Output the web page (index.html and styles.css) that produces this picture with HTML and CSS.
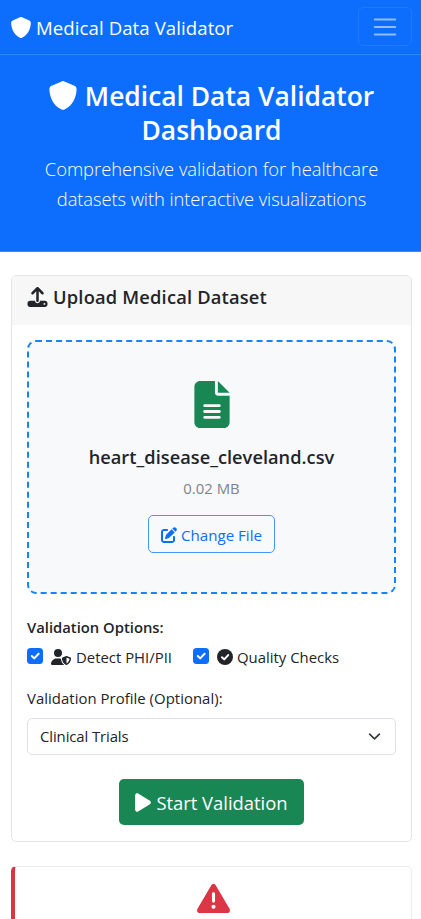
FILE: index.html
```html
<!DOCTYPE html>
<html lang="en">
<head>
<meta charset="utf-8">
<meta name="viewport" content="width=device-width, initial-scale=1">
<title>Medical Data Validator</title>
<link rel="stylesheet" href="styles.css">
</head>
<body>
<nav class="navbar">
  <a class="brand"><svg class="brand-icon" viewBox="16 0 480 512"><path d="M256 0c4.6 0 9.2 1 13.4 2.9L457.7 82.8c22 9.3 38.4 31 38.3 57.2c-.5 99.2-41.3 280.7-213.6 363.2c-16.7 8-36.1 8-52.8 0C57.3 420.7 16.5 239.2 16 140c-.1-26.2 16.3-47.9 38.3-57.2L242.7 2.9C246.8 1 251.4 0 256 0z"/></svg><span>Medical Data Validator</span></a>
  <button class="toggler" aria-label="Toggle navigation"><svg viewBox="0 0 30 30"><path d="M4 7h22M4 15h22M4 23h22"/></svg></button>
</nav>
<header class="hero">
  <h1><svg class="hero-icon" viewBox="16 0 480 512"><path d="M256 0c4.6 0 9.2 1 13.4 2.9L457.7 82.8c22 9.3 38.4 31 38.3 57.2c-.5 99.2-41.3 280.7-213.6 363.2c-16.7 8-36.1 8-52.8 0C57.3 420.7 16.5 239.2 16 140c-.1-26.2 16.3-47.9 38.3-57.2L242.7 2.9C246.8 1 251.4 0 256 0z"/></svg><span>Medical Data Validator</span><br><span>Dashboard</span></h1>
  <p class="lead"><span>Comprehensive validation for healthcare</span><br><span class="lead-tail">datasets with interactive visualizations</span></p>
</header>
<main class="container">
  <section class="card">
    <h2 class="card-header"><svg class="upload-icon" viewBox="0 0 512 512"><path d="M288 109.3V352c0 17.7-14.3 32-32 32s-32-14.3-32-32V109.3l-73.4 73.4c-12.5 12.5-32.8 12.5-45.3 0s-12.5-32.8 0-45.3l128-128c12.5-12.5 32.8-12.5 45.3 0l128 128c12.5 12.5 12.5 32.8 0 45.3s-32.8 12.5-45.3 0L288 109.3zM64 352H192c0 35.3 28.7 64 64 64s64-28.7 64-64H448c35.3 0 64 28.7 64 64v32c0 35.3-28.7 64-64 64H64c-35.3 0-64-28.7-64-64V416c0-35.3 28.7-64 64-64zM432 456a24 24 0 1 0 0-48 24 24 0 1 0 0 48z"/></svg><span>Upload Medical Dataset</span></h2>
    <div class="card-body">
      <div class="dropzone">
        <svg class="file-icon" viewBox="0 0 384 512"><path d="M64 0C28.7 0 0 28.7 0 64V448c0 35.3 28.7 64 64 64H320c35.3 0 64-28.7 64-64V160H256c-17.7 0-32-14.3-32-32V0H64zM256 0V128H384L256 0zM112 252H272c8.800 0 16 7.200 16 16s-7.200 16-16 16H112c-8.800 0-16-7.200-16-16s7.200-16 16-16zm0 64H272c8.800 0 16 7.200 16 16s-7.200 16-16 16H112c-8.800 0-16-7.200-16-16s7.200-16 16-16zm0 64H272c8.800 0 16 7.200 16 16s-7.200 16-16 16H112c-8.800 0-16-7.200-16-16s7.200-16 16-16z" fill-rule="evenodd"/></svg>
        <h3 class="filename"><span>heart_disease_cleveland.csv</span></h3>
        <p class="filesize"><span>0.02 MB</span></p>
        <button class="btn-outline"><svg class="edit-icon" viewBox="0 0 512 512"><path d="M471.6 21.7c-21.9-21.9-57.3-21.9-79.2 0L362.3 51.7l97.9 97.9 30.1-30.1c21.9-21.9 21.9-57.3 0-79.2L471.6 21.7zm-299.2 220c-6.1 6.1-10.8 13.6-13.5 21.9l-29.6 88.8c-2.900 8.600-.6 18.1 5.800 24.600s15.900 8.700 24.600 5.800l88.800-29.600c8.200-2.700 15.700-7.400 21.900-13.500L437.700 172.300 339.700 74.300 172.400 241.700zM96 64C43 64 0 107 0 160V416c0 53 43 96 96 96H352c53 0 96-43 96-96V320c0-17.7-14.3-32-32-32s-32 14.3-32 32v96c0 17.7-14.3 32-32 32H96c-17.7 0-32-14.3-32-32V160c0-17.7 14.3-32 32-32h96c17.7 0 32-14.3 32-32s-14.3-32-32-32H96z"/></svg><span>Change File</span></button>
      </div>
      <p class="options-title"><span>Validation Options:</span></p>
      <div class="options">
        <label class="option"><svg class="check" viewBox="0 0 16 16"><rect width="16" height="16" rx="3.5"/><path d="M4.800 8l2.400 2.400 4.400-4.600"/></svg><svg class="phi-icon" viewBox="0 0 640 512"><path d="M224 256A128 128 0 1 0 224 0a128 128 0 1 0 0 256zm-45.7 48C79.8 304 0 383.8 0 482.3C0 498.7 13.3 512 29.7 512H418.3c1.800 0 3.500-.2 5.300-.5c-76.3-55.1-99.8-141-103.1-200.2c-16.1-4.800-33.1-7.300-50.7-7.300H178.3zm308.800-78.300l-120 48C358 277.4 352 286.2 352 296c0 63.3 25.9 168.8 134.8 214.2c5.900 2.500 12.600 2.500 18.500 0C614.1 464.8 640 359.3 640 296c0-9.800-6-18.600-15.100-22.300l-120-48c-5.700-2.300-12.100-2.300-17.800 0zM591.4 312c-3.900 50.7-27.2 116.7-95.400 149.700V273.800L591.4 312z"/></svg><span>Detect PHI/PII</span></label>
        <label class="option"><svg class="check" viewBox="0 0 16 16"><rect width="16" height="16" rx="3.5"/><path d="M4.800 8l2.400 2.400 4.400-4.600"/></svg><svg class="quality-icon" viewBox="0 0 16 16"><circle cx="8" cy="8" r="8"/><path d="M5 8.200l2.200 2.200 4-4.300"/></svg><span>Quality Checks</span></label>
      </div>
      <p class="profile-label"><span>Validation Profile (Optional):</span></p>
      <div class="select"><span>Clinical Trials</span><svg viewBox="0 0 16 16"><path d="m2 5 6 6 6-6"/></svg></div>
      <button class="btn-start"><svg viewBox="0 0 384 512"><path d="M73 39c-14.8-9.1-33.4-9.4-48.5-.9S0 62.6 0 80V432c0 17.4 9.4 33.4 24.5 41.9s33.7 8.1 48.5-.9L361 297c14.3-8.7 23-24.2 23-41s-8.7-32.2-23-41L73 39z"/></svg><span>Start Validation</span></button>
    </div>
  </section>
  <section class="card result">
    <svg viewBox="0 32 512 448"><path d="M256 32c14.2 0 27.3 7.5 34.5 19.8l216 368c7.3 12.4 7.3 27.7 .2 40.1S486.3 480 472 480H40c-14.3 0-27.6-7.7-34.7-20.1s-7-27.8 .2-40.1l216-368C228.7 39.5 241.8 32 256 32zm0 128c-13.3 0-24 10.7-24 24V296c0 13.3 10.7 24 24 24s24-10.7 24-24V184c0-13.3-10.7-24-24-24zm32 224a32 32 0 1 0 -64 0 32 32 0 1 0 64 0z"/></svg>
  </section>
</main>
</body>
</html>
```
FILE: styles.css
```css
* { box-sizing: border-box; }
body {
  margin: 0;
  background: #fff;
  color: #212529;
  font: 14.9px/22px "Open Sans", "Noto Sans", sans-serif;
}
h1, h2, h3, p { margin: 0; }
svg { display: block; flex: none; fill: currentColor; }
span { white-space: nowrap; }
button { font: inherit; cursor: pointer; }

.navbar {
  display: flex;
  justify-content: space-between;
  align-items: center;
  height: 55px;
  padding: 0 9px 1px 11px;
  background: #0d6efd;
  border-bottom: 1px solid #3284fd;
  color: #fff;
}
.brand { display: flex; align-items: center; gap: 5px; font-size: 18.6px; line-height: 28px; letter-spacing: .08px; }
.brand span { padding-top: 3px; }
.brand-icon { width: 20px; height: 21px; margin-top: 2px; }
.toggler {
  display: flex;
  align-items: center;
  justify-content: center;
  width: 54px;
  height: 39px;
  padding: 0;
  background: none;
  border: 1px solid #1f79fd;
  border-radius: 5px;
}
.toggler svg { width: 28px; height: 28px; fill: none; stroke: rgba(255, 255, 255, .55); stroke-width: 2; stroke-linecap: round; }

.hero { height: 197px; padding: 24px 9px 0 11px; background: #0d6efd; color: #fff; text-align: center; border-bottom: 1px solid #3c89f8; }
.hero h1 { font-size: 26.4px; line-height: 34px; font-weight: 600; }
.hero-icon { display: inline-block; width: 28px; height: 29px; margin-right: 8px; vertical-align: -4px; }
.lead { margin-top: 7px; font-size: 18.35px; line-height: 30px; font-weight: 300; }
.lead-tail { letter-spacing: -.08px; }

.container { padding: 23px 9px 0 11px; }
.card { border: 1px solid #e5e5e6; border-radius: 5px; overflow: hidden; }
.card-header {
  display: flex;
  align-items: center;
  gap: 5px;
  height: 49px;
  padding: 0 16px 7px 15px;
  background: #f7f7f7;
  font-size: 18.3px;
  font-weight: 600;
  letter-spacing: .19px;
}
.upload-icon { width: 21px; height: 20px; }
.card-body { height: 516px; padding: 15px; display: flex; flex-direction: column; }
.dropzone {
  display: flex;
  flex-direction: column;
  align-items: center;
  height: 254px;
  padding-top: 39px;
  border: 2px dashed #1584ff;
  border-radius: 9px;
  background: #f8f9fb;
}
.file-icon { width: 36px; height: 47px; color: #198754; }
.filename { margin-top: 18px; font-size: 18.2px; line-height: 22px; font-weight: 600; letter-spacing: .04px; }
.filesize { margin-top: 9px; color: #7c858d; }
.btn-outline {
  display: flex;
  align-items: center;
  justify-content: center;
  gap: 4px;
  width: 127px;
  height: 38px;
  margin-top: 16px;
  padding: 1px 0 0;
  border: 1px solid #4a92fd;
  border-radius: 5px;
  background: none;
  color: #0d6efd;
  font-size: 15.1px;
}
.edit-icon { width: 16px; height: 16px; }
.options-title { margin-top: 22px; font-size: 14.8px; font-weight: 600; }
.options { display: flex; gap: 21px; margin-top: 8px; }
.option { display: flex; align-items: center; }
.check { width: 16px; height: 16px; margin-right: 8px; margin-top: -2px; }
.check rect { fill: #0d6efd; }
.check path, .quality-icon path { fill: none; stroke: #fff; stroke-width: 2; stroke-linecap: round; stroke-linejoin: round; }
.phi-icon { width: 20px; height: 16px; margin-right: 5px; }
.quality-icon { width: 16px; height: 16px; margin-right: 4px; }
.profile-label { margin-top: 19px; letter-spacing: .04px; }
.select {
  display: flex;
  justify-content: space-between;
  align-items: center;
  height: 37px;
  margin-top: 9px;
  padding: 0 14px 0 12px;
  border: 1px solid #dee2e6;
  border-radius: 5px;
  letter-spacing: -.1px;
}
.select span { padding-bottom: 2px; }
.select svg { width: 13px; height: 13px; fill: none; stroke: #343a40; stroke-width: 2; stroke-linecap: round; stroke-linejoin: round; }
.btn-start {
  display: flex;
  align-items: center;
  align-self: center;
  justify-content: center;
  gap: 5px;
  width: 185px;
  height: 46px;
  margin-top: 24px;
  padding: 1px 0 0;
  border: 0;
  border-radius: 5px;
  background: #198754;
  color: #fff;
  font-size: 18.4px;
}
.btn-start svg { width: 16px; height: 21px; }
.result { height: 53px; margin-top: 24px; padding-top: 17px; border-color: #ececed; border-left: 4px solid #dc3545; border-bottom: 0; border-radius: 5px 5px 0 0; }
.result svg { width: 33px; height: 29px; margin: 0 auto; color: #dc3545; }
```
